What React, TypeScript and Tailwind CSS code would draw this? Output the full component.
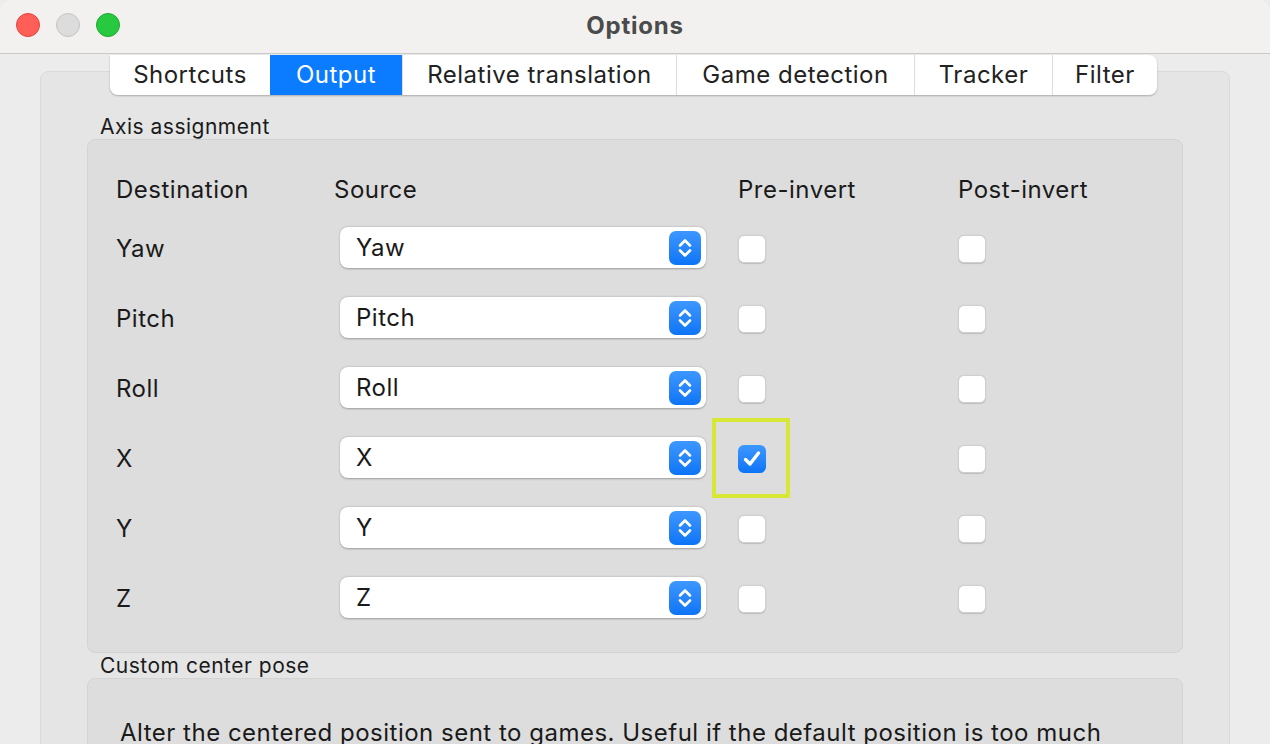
import React from "react"

const tabs = [
  { name: "Shortcuts", w: "w-[160px]" },
  { name: "Output", w: "w-[132px]" },
  { name: "Relative translation", w: "w-[274px]" },
  { name: "Game detection", w: "w-[238px]" },
  { name: "Tracker", w: "w-[138px]" },
  { name: "Filter", w: "w-[105px]" },
]
const rows = ["Yaw", "Pitch", "Roll", "X", "Y", "Z"]

function Stepper() {
  return (
    <div className="flex h-[34px] w-[32px] items-center justify-center rounded-[7px] bg-gradient-to-b from-[#3d97ff] to-[#0a74f6]">
      <svg width="16" height="24" viewBox="0 0 16 24" fill="none" stroke="white" strokeWidth="2.6" strokeLinecap="round" strokeLinejoin="round">
        <path d="M3 9.5 L8 4.5 L13 9.5" />
        <path d="M3 14.5 L8 19.5 L13 14.5" />
      </svg>
    </div>
  )
}

function Combo({ value }: { value: string }) {
  return (
    <div className="mb-[3px] ml-[6px] flex h-[41px] w-[366px] items-center justify-between rounded-[8px] bg-white pl-[16px] pr-[5px] shadow-[0_0.5px_2px_rgba(0,0,0,0.3)]">
      <span className="text-[#1a1a1a]">{value}</span>
      <Stepper />
    </div>
  )
}

function Checkbox({ checked }: { checked?: boolean }) {
  if (checked) {
    return (
      <div className="flex h-[28px] w-[28px] items-center justify-center rounded-[6px] bg-gradient-to-b from-[#3d97ff] to-[#0a74f6]">
        <svg width="22" height="22" viewBox="0 0 22 22" fill="none" stroke="white" strokeWidth="3.4" strokeLinecap="round" strokeLinejoin="round">
          <path d="M4.5 11.5 L9 16 L17.5 5" />
        </svg>
      </div>
    )
  }
  return <div className="h-[28px] w-[28px] rounded-[6px] border border-[#cfcfcf] bg-white shadow-[0_0.5px_1px_rgba(0,0,0,0.15)]" />
}

export default function App() {
  return (
    <div className="h-[744px] w-[1270px] overflow-hidden bg-[#ececec] font-['Inter',sans-serif] text-[24px] tracking-[0.5px] text-[#1a1a1a]">
      {/* Title bar */}
      <div className="relative flex h-[54px] items-center justify-center rounded-t-[12px] border-b border-[#c9c9c9] bg-[#f2f1ef]">
        <div className="absolute left-[16px] top-[13px] flex gap-[16px]">
          <div className="h-[24px] w-[24px] rounded-full border border-[#e0443e] bg-[#ff5f57]" />
          <div className="h-[24px] w-[24px] rounded-full border border-[#c4c4c4] bg-[#dcdcdc]" />
          <div className="h-[24px] w-[24px] rounded-full border border-[#1aab29] bg-[#28c840]" />
        </div>
        <span className="-mt-[2px] text-[24px] font-bold tracking-[0.8px] text-[#4b4b4b]">Options</span>
      </div>

      {/* Tab widget */}
      <div className="px-[40px]">
        <div className="relative z-10 mt-[1px] flex justify-center pr-[3px]">
          <div className="flex h-[40px] overflow-hidden rounded-b-[8px] rounded-tr-[8px] bg-white shadow-[0_1px_2px_rgba(0,0,0,0.25)]">
            {tabs.map((t, i) => (
              <div
                key={t.name}
                className={
                  t.name === "Output"
                    ? "flex items-center justify-center bg-[#0b7bff] text-white " + t.w
                    : "flex items-center justify-center text-[#222] " +
                      t.w +
                      (i > 1 ? " border-l border-[#dedede]" : "")
                }
              >
                {t.name}
              </div>
            ))}
          </div>
        </div>

        <div className="-mt-[24px] h-[720px] rounded-[8px] border border-[#dadada] bg-[#e5e5e5] px-[46px] pt-[43px]">
          <div className="pl-[13px] text-[21px] leading-[24px] tracking-[0.5px]">Axis assignment</div>
          <div className="rounded-[8px] border border-[#d4d4d4] bg-[#dddddd] pb-[18px] pl-[28px] pt-[32px]">
            <div className="flex h-[36px] items-center">
              <div className="w-[218px]">Destination</div>
              <div className="w-[404px]">Source</div>
              <div className="w-[220px]">Pre-invert</div>
              <div>Post-invert</div>
            </div>
            <div className="mt-[6px]">
              {rows.map((r) => (
                <div key={r} className="flex h-[70px] items-center">
                  <div className="w-[218px]">{r}</div>
                  <div className="w-[404px]">
                    <Combo value={r} />
                  </div>
                  <div className="relative w-[220px]">
                    <Checkbox checked={r === "X"} />
                    {r === "X" && (
                      <div className="absolute -left-[26px] -top-[27px] h-[80px] w-[78px] border-[4px] border-[#d7e736]" />
                    )}
                  </div>
                  <div>
                    <Checkbox />
                  </div>
                </div>
              ))}
            </div>
          </div>

          <div className="mt-[1px] pl-[13px] text-[21px] leading-[24px] tracking-[0.5px]">Custom center pose</div>
          <div className="h-[200px] rounded-[8px] border border-[#d4d4d4] bg-[#dddddd] pl-[32px] pt-[36px]">
            <div className="whitespace-nowrap">
              Alter the centered position sent to games. Useful if the default position is too much
            </div>
          </div>
        </div>
      </div>
    </div>
  )
}
